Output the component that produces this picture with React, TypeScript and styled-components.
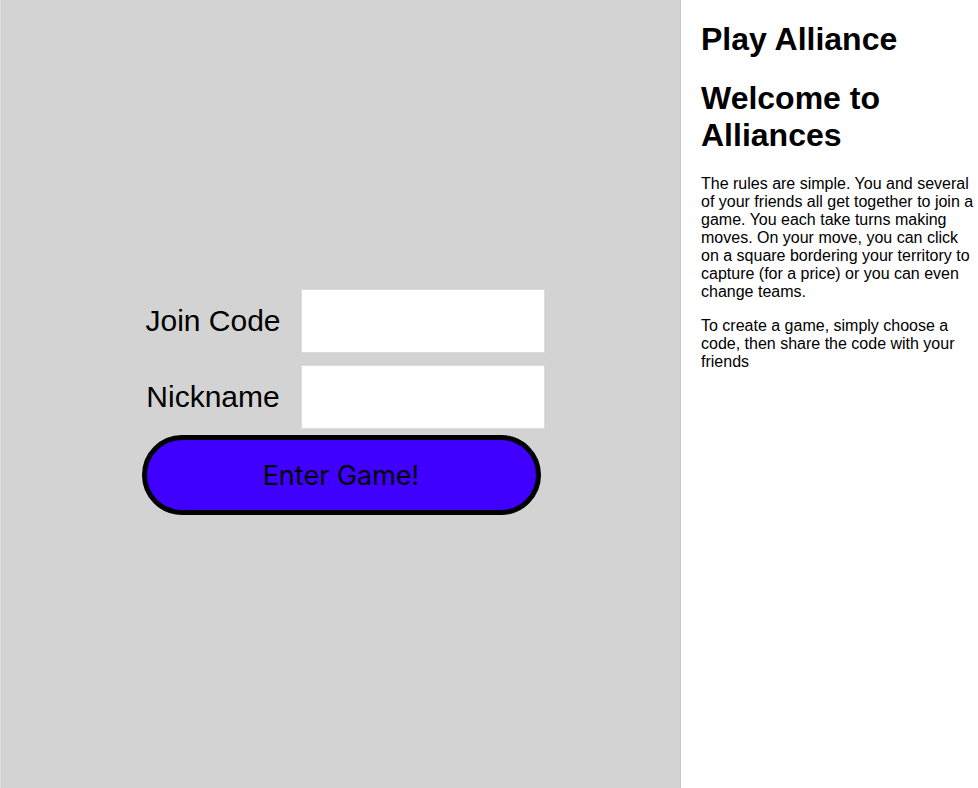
import React from "react";
import styled, { createGlobalStyle } from "styled-components";

const Global = createGlobalStyle`
  html, body { margin: 0; padding: 0; height: 100%; }
  body { font-family: "Liberation Sans", Arial, Helvetica, sans-serif; color: #000; background: #fff; }
  #root { height: 100%; }
`;

const Page = styled.div`
  display: flex;
  height: 788px;
  width: 978px;
  overflow: hidden;
`;

const PlayArea = styled.div`
  width: 681px;
  flex: none;
  box-sizing: border-box;
  background: #d3d3d3;
  border-left: 1px solid #dedede;
  border-right: 1px solid #c9c9c9;
  display: flex;
  align-items: center;
  justify-content: center;
  padding: 16px 0 0 5px;
`;

const Form = styled.form`
  display: grid;
  grid-template-columns: 143px 244px;
  column-gap: 16px;
  row-gap: 12px;
  align-items: center;
`;

const Label = styled.label`
  font-family: "Liberation Sans", Arial, sans-serif;
  font-size: 30px;
  text-align: center;
  line-height: 1.15;
`;

const Input = styled.input`
  box-sizing: border-box;
  width: 244px;
  height: 64px;
  border: 1px solid #dcdcdc;
  background: #fff;
  outline: none;
  font-size: 24px;
  padding: 0 8px;
`;

const EnterButton = styled.button`
  grid-column: 1 / -1;
  margin-top: -6px;
  box-sizing: border-box;
  width: 399px;
  height: 80px;
  border: 5px solid #000;
  border-radius: 40px;
  background: #4000ff;
  color: #000;
  font-family: Inter, "Liberation Sans", sans-serif;
  font-size: 27px;
  cursor: pointer;
  padding: 0;
`;

const Info = styled.div`
  flex: 1;
  padding: 0 2px 0 20px;
`;

const Heading = styled.h1`
  font-family: "Liberation Sans", Arial, sans-serif;
  font-size: 32px;
  font-weight: bold;
  margin: 21.44px 0;
`;

const Para = styled.p`
  font-family: "Liberation Sans", Arial, sans-serif;
  font-size: 16px;
  margin: 16px 0;
`;

export default function App() {
  return (
    <>
      <Global />
      <Page>
        <PlayArea>
          <Form onSubmit={(e) => e.preventDefault()}>
            <Label htmlFor="code">Join Code</Label>
            <Input id="code" />
            <Label htmlFor="nick">Nickname</Label>
            <Input id="nick" />
            <EnterButton type="submit">Enter Game!</EnterButton>
          </Form>
        </PlayArea>
        <Info>
          <Heading>Play Alliance</Heading>
          <Heading>Welcome to Alliances</Heading>
          <Para>
            The rules are simple. You and several of your friends all get together to join a
            game. You each take turns making moves. On your move, you can click on a square
            bordering your territory to capture (for a price) or you can even change teams.
          </Para>
          <Para>
            To create a game, simply choose a code, then share the code with your friends
          </Para>
        </Info>
      </Page>
    </>
  );
}
